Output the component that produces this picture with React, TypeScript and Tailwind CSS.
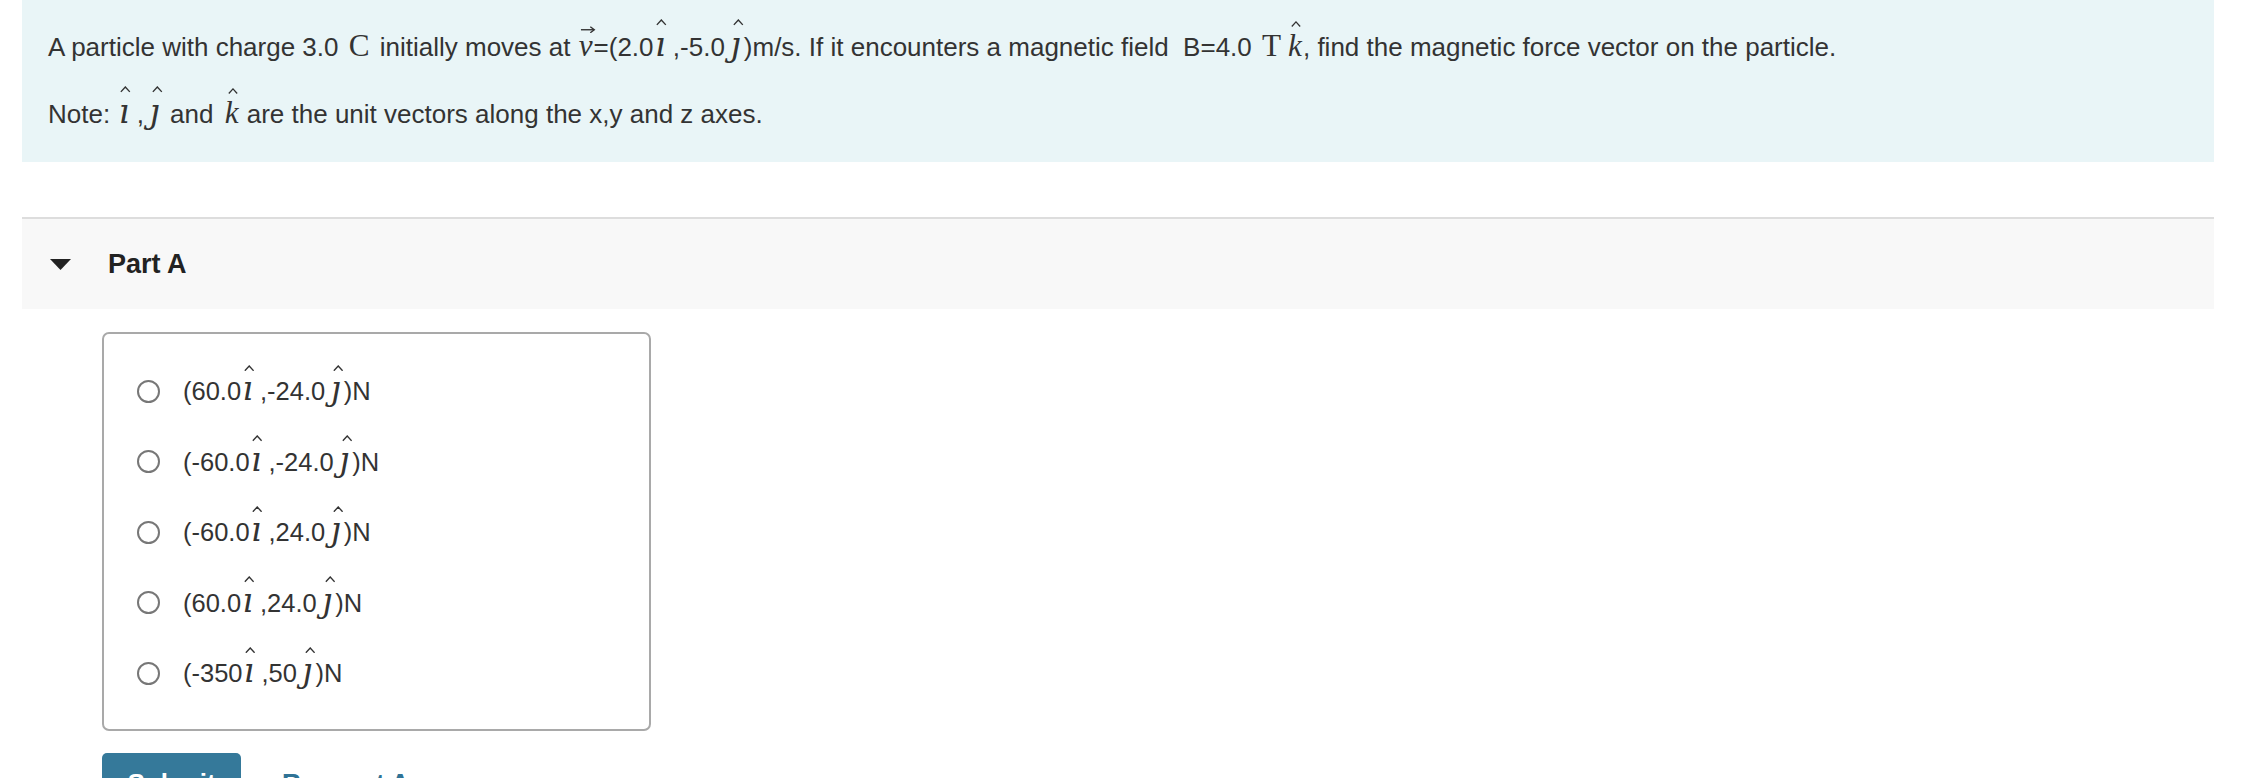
import React from 'react';

// small chevron drawn over a unit vector letter
const Caret = ({ cls }: { cls: string }) => (
  <svg viewBox="0 0 10 6" className={'absolute w-[0.32em] h-[0.2em] ' + cls}>
    <polyline points="0.8,5.4 5,0.8 9.2,5.4" fill="none" stroke="#333333" strokeWidth="1.3" />
  </svg>
);

// unit vector glyph: dotless letter with a hat sitting above it
const Hat = ({ ch }: { ch: string }) => {
  if (ch === 'k') {
    return (
      <span className="relative leading-[0px] italic text-[1.2em] font-['Liberation_Serif',serif] pl-[4px] pr-[1px]">
        k
        <Caret cls="left-[38%] top-[-0.24em]" />
      </span>
    );
  }
  const isI = ch === 'ı';
  return (
    <span
      className={
        "relative leading-[0px] italic text-[1.28em] font-['DejaVu_Serif',serif] " +
        (isI ? 'ml-[0.04em] mr-[0.22em]' : 'ml-[0.16em] mr-[0.1em]')
      }
    >
      {ch}
      <Caret cls={isI ? 'left-[13%] top-[-0.17em]' : 'left-[27%] top-[-0.17em]'} />
    </span>
  );
};

const Roman = ({ ch }: { ch: string }) => (
  <span className="font-['Liberation_Serif',serif] text-[1.2em] leading-[0px] px-[3px]">{ch}</span>
);

const VecV = () => (
  <span className="relative leading-[0px] font-['Liberation_Serif',serif] italic text-[1.2em] px-[1px]">
    v
    <svg viewBox="0 0 12 6" className="absolute left-[16%] top-[-0.08em] w-[0.5em] h-[0.24em]">
      <line x1="0.5" y1="3" x2="11" y2="3" stroke="#333333" strokeWidth="1.1" />
      <polyline points="8,0.6 11.2,3 8,5.4" fill="none" stroke="#333333" strokeWidth="1.1" />
    </svg>
  </span>
);

const options = [
  { a: '(60.0', b: ',-24.0', c: ')N' },
  { a: '(-60.0', b: ',-24.0', c: ')N' },
  { a: '(-60.0', b: ',24.0', c: ')N' },
  { a: '(60.0', b: ',24.0', c: ')N' },
  { a: '(-350', b: ',50', c: ')N' },
];

export default function App() {
  return (
    <div className="min-h-[778px] bg-white font-['Liberation_Sans',Arial,sans-serif] text-[#333333]">
      <div className="ml-[22px] w-[2192px]">
        <div className="bg-[#e9f5f7] pl-[26px] pr-6 pt-[29px] pb-[30px] text-[26px] leading-[36px]">
          <p>
            A particle with charge 3.0 <Roman ch="C" /> initially moves at <VecV />=(2.0
            <Hat ch="ı" />,-5.0
            <Hat ch="ȷ" />
            )m/s. If it encounters a magnetic field&nbsp; B=4.0 <Roman ch="T" />
            <Hat ch="k" />, find the magnetic force vector on the particle.
          </p>
          <p className="mt-[31px]">
            Note: <Hat ch="ı" />,<Hat ch="ȷ" /> and <Hat ch="k" /> are the unit vectors along the x,y and z axes.
          </p>
        </div>

        <div className="mt-[55px] border-t-2 border-[#dddddd] bg-[#f8f8f8] h-[92px] flex items-center">
          <svg width="21" height="11" viewBox="0 0 21 11" className="ml-[28px]">
            <polygon points="0,0 21,0 10.5,11" fill="#222222" />
          </svg>
          <h2 className="ml-[37px] text-[27px] font-bold text-[#222222]">Part A</h2>
        </div>

        <div className="ml-[80px] mt-[23px] w-[549px] border-2 border-[#a9a9a9] rounded-[7px] pt-[22px] pb-[20px] pl-[33px]">
          {options.map((o, i) => (
            <label key={i} className="flex items-center h-[70.5px] text-[25.5px] leading-[36px]">
              <span className="w-[23px] h-[23px] rounded-full border-[2px] border-[#777777] bg-white shrink-0" />
              <span className="ml-[23px]">
                {o.a}
                <Hat ch="ı" />
                {o.b}
                <Hat ch="ȷ" />
                {o.c}
              </span>
            </label>
          ))}
        </div>

        <div className="ml-[80px] mt-[22px] flex items-center">
          <button className="w-[139px] h-[62px] rounded-[5px] bg-[#35799a] text-white text-[26px] font-bold">
            Submit
          </button>
          <span className="ml-[41px] text-[26px] font-bold text-[#2f7396]">Request Answer</span>
        </div>
      </div>
    </div>
  );
}
